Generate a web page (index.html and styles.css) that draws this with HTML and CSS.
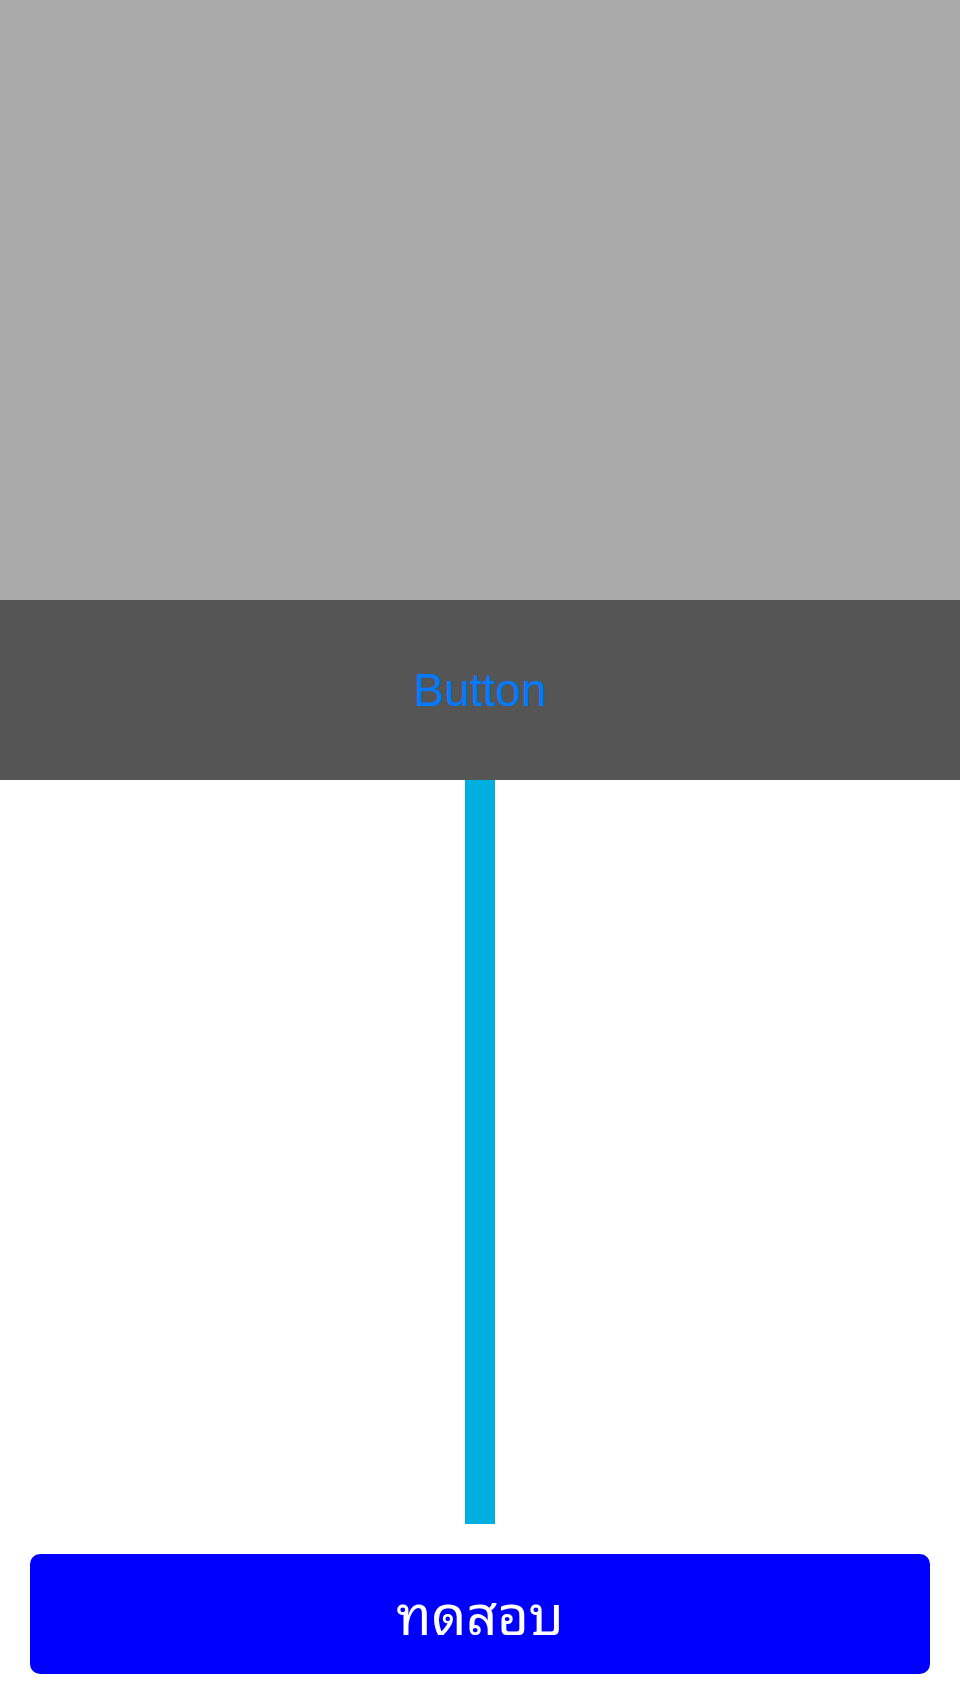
FILE: index.html
```html
<!DOCTYPE html>
<html lang="th">
<head>
<meta charset="utf-8">
<title>Test</title>
<link rel="stylesheet" href="styles.css">
</head>
<body>
<div class="screen">
  <div class="top"></div>
  <div class="bar"><span class="bar-btn">Button</span></div>
  <div class="middle"><div class="line"></div></div>
  <div class="footer"><div class="action">ทดสอบ</div></div>
</div>
</body>
</html>
```
FILE: styles.css
```css
html, body {
  margin: 0;
  padding: 0;
  background: #ffffff;
}
.screen {
  width: 960px;
  height: 1704px;
  display: flex;
  flex-direction: column;
}
.top {
  height: 600px;
  background: #aaaaaa;
}
.bar {
  height: 180px;
  background: #555555;
  display: flex;
  align-items: center;
  justify-content: center;
}
.bar-btn {
  font-family: "Liberation Sans", Arial, sans-serif;
  font-size: 46px;
  color: #007aff;
  line-height: 1;
}
.middle {
  flex: 1;
  display: flex;
  justify-content: center;
}
.line {
  width: 30px;
  background: #00afe0;
}
.footer {
  padding: 30px;
}
.action {
  height: 120px;
  box-sizing: border-box;
  padding-bottom: 8px;
  border-radius: 10px;
  background: #0000ff;
  color: #ffffff;
  display: flex;
  align-items: center;
  justify-content: center;
  font-family: "Noto Sans Thai Looped", "Noto Looped Thai", "Loma", "Garuda", "Tlwg Typo", "Norasi", "Noto Sans Thai", sans-serif;
  font-size: 54px;
}
```
